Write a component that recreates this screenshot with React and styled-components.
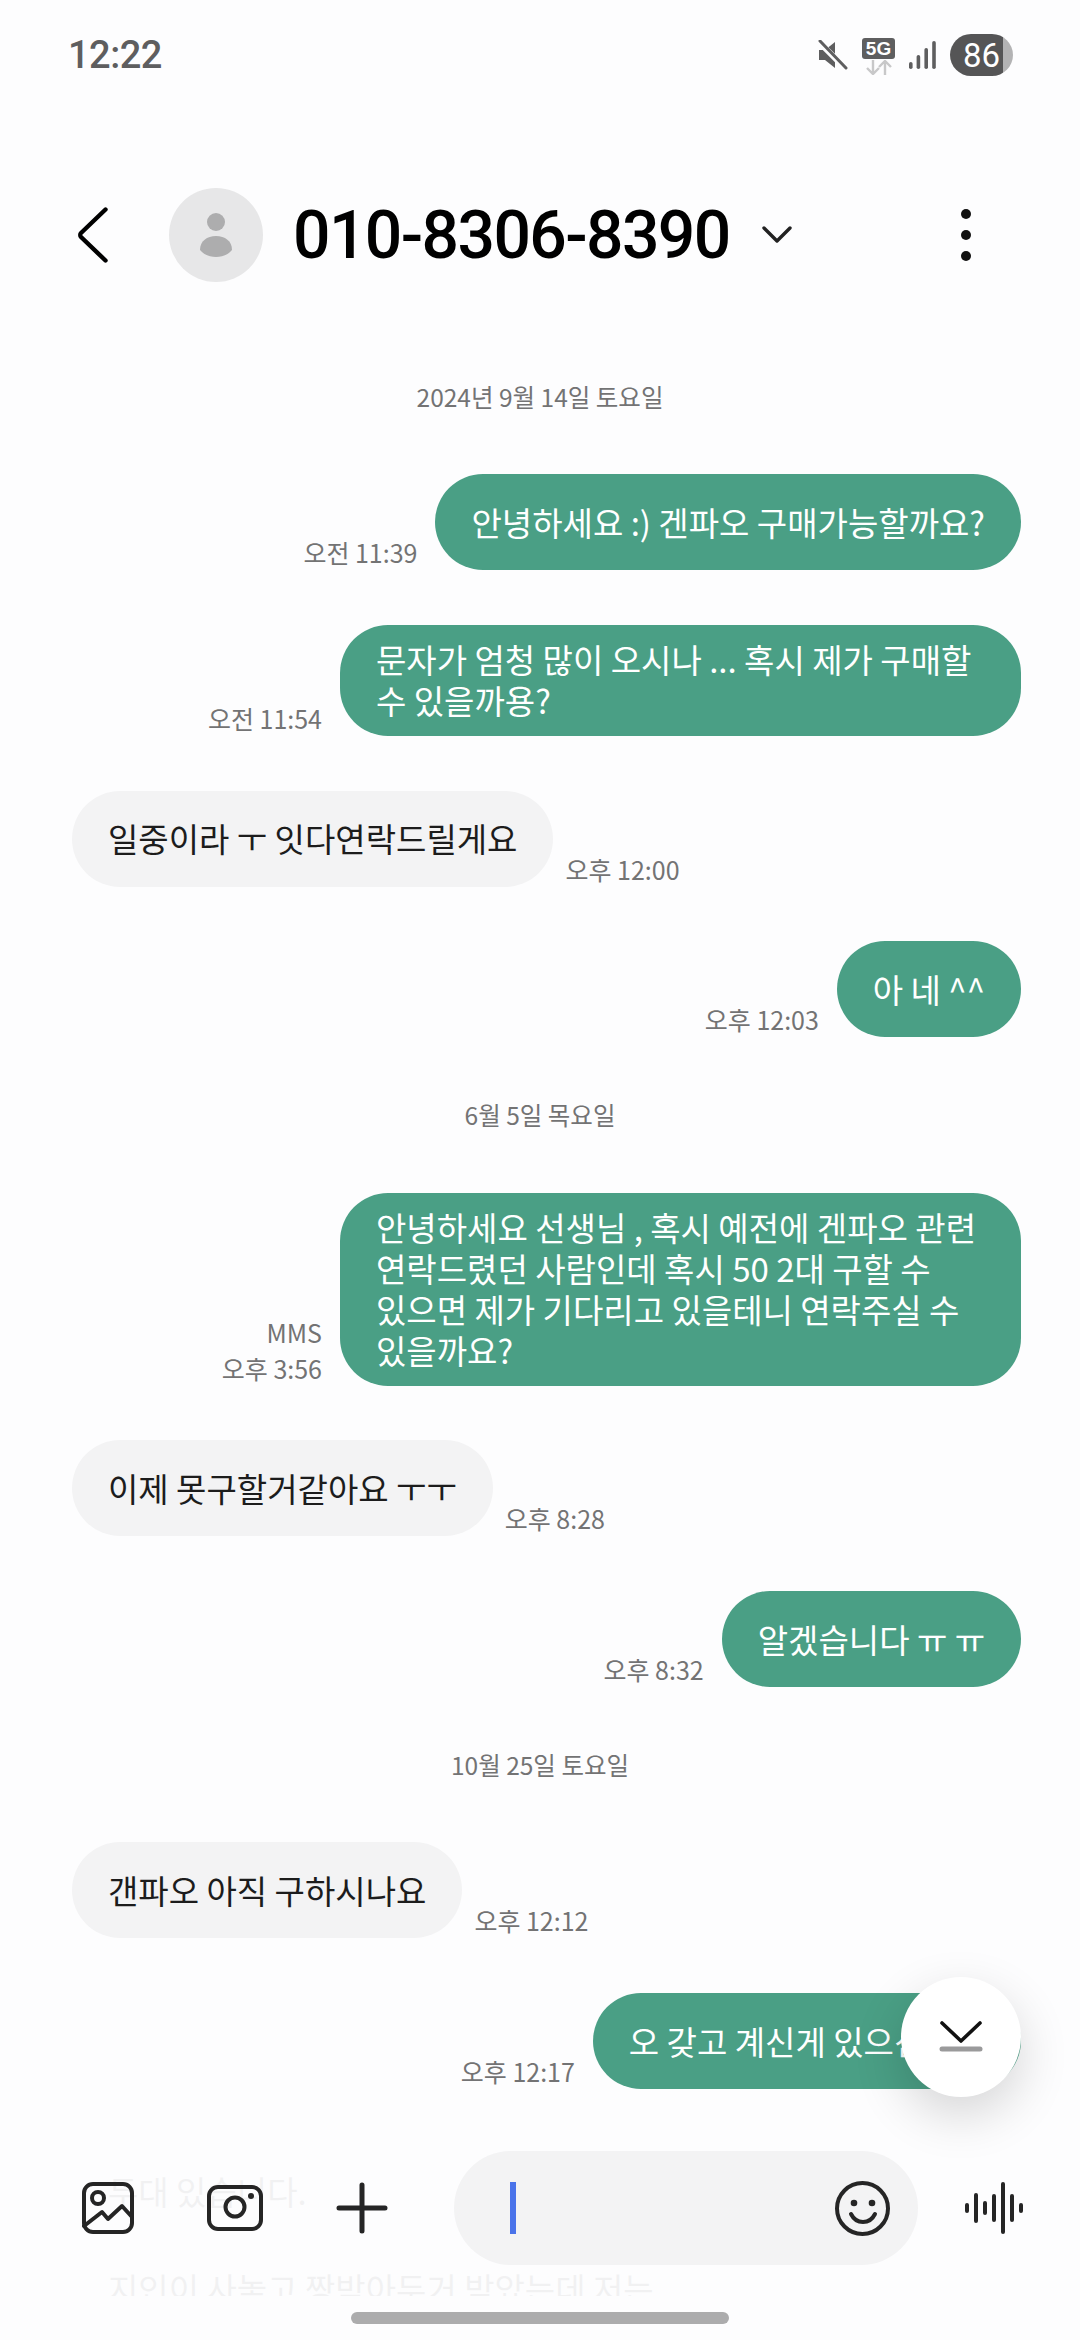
import React from "react";
import styled, { createGlobalStyle } from "styled-components";

const FONT = `"Noto Sans CJK KR", "Noto Sans", sans-serif`;

const GlobalStyle = createGlobalStyle`
  html, body {
    margin: 0;
    padding: 0;
    background: #fdfdfe;
    font-family: ${FONT};
  }
`;

const messages = [
  { date: "2024년 9월 14일 토요일" },
  { mine: true, time: "오전 11:39", text: "안녕하세요 :) 겐파오 구매가능할까요?" },
  { mine: true, time: "오전 11:54", text: "문자가 엄청 많이 오시나 ... 혹시 제가 구매할 수 있을까용?" },
  { time: "오후 12:00", text: "일중이라 ㅜ 잇다연락드릴게요" },
  { mine: true, time: "오후 12:03", text: "아 네 ^^" },
  { date: "6월 5일 목요일" },
  {
    mine: true,
    tag: "MMS",
    time: "오후 3:56",
    text: "안녕하세요 선생님 , 혹시 예전에 겐파오 관련 연락드렸던 사람인데 혹시 50 2대 구할 수 있으면 제가 기다리고 있을테니 연락주실 수 있을까요?",
  },
  { time: "오후 8:28", text: "이제 못구할거같아요 ㅜㅜ" },
  { mine: true, time: "오후 8:32", text: "알겠습니다 ㅠ ㅠ" },
  { date: "10월 25일 토요일" },
  { time: "오후 12:12", text: "갠파오 아직 구하시나요" },
  { mine: true, time: "오후 12:17", text: "오 갖고 계신게 있으신가요" },
  { text: "두대 있습니다." },
  { tight: true, text: "지인이 사놓고 짱박아두거 받았는데 저는\n\u00a0" },
];

const App = () => (
  <Phone>
    <GlobalStyle />
    <StatusBar>
      <Clock>12:22</Clock>
      <StatusIcons>
        <svg width="30" height="30" viewBox="0 0 30 30">
          <path d="M1 10h6l10-8v26l-10-8H1z" fill="#5e5e5f" />
          <path d="M2 3l26 26" stroke="#fdfdfe" strokeWidth="6" />
          <path d="M2 1l26 27" stroke="#5e5e5f" strokeWidth="3" strokeLinecap="round" />
        </svg>
        <NetworkIcon>
          <FiveG>5G</FiveG>
          <svg width="32" height="15" viewBox="0 0 32 15" fill="none" stroke="#c8c8c9" strokeWidth="2.4">
            <path d="M10 0v14M4 8l6 6 6-6M22 15V1M16 7l6-6 6 6" />
          </svg>
        </NetworkIcon>
        <svg width="27" height="28" viewBox="0 0 27 28" fill="#5e5e5f">
          <rect x="0" y="21" width="3.6" height="7" rx="1.8" />
          <rect x="7.6" y="14" width="3.6" height="14" rx="1.8" />
          <rect x="15.4" y="7" width="3.6" height="21" rx="1.8" />
          <rect x="23.2" y="0" width="3.6" height="28" rx="1.8" />
        </svg>
        <Battery level={84}>
          <span>86</span>
        </Battery>
      </StatusIcons>
    </StatusBar>

    <Header>
      <BackButton>
        <svg width="30" height="56" viewBox="0 0 30 56" fill="none" stroke="#000" strokeWidth="4.4" strokeLinecap="round" strokeLinejoin="round">
          <path d="M27.5 2.5L3 26c-1 1-1 3 0 4l24.5 23.500" />
        </svg>
      </BackButton>
      <Avatar>
        <svg width="32" height="44" viewBox="0 0 32 44" fill="#adadae">
          <circle cx="16" cy="9" r="9" />
          <path d="M0 37C0 28 7 23 16 23s16 5 16 14c-4 5-10 7-16 7S4 42 0 37z" />
        </svg>
      </Avatar>
      <ContactName>010-8306-8390</ContactName>
      <Chevron>
        <svg width="30" height="18" viewBox="0 0 30 18" fill="none" stroke="#222" strokeWidth="3.4" strokeLinecap="round" strokeLinejoin="round">
          <path d="M2 2l13 13L28 2" />
        </svg>
      </Chevron>
      <MoreDots>
        <i />
        <i />
        <i />
      </MoreDots>
    </Header>

    <Thread>
      {messages.map((m, i) =>
        m.date ? (
          <DateLine key={i}>{m.date}</DateLine>
        ) : (
          <Row key={i} $mine={m.mine} $tight={m.tight}>
            {m.time && (
              <Meta>
                {m.tag && <div>{m.tag}</div>}
                <div>{m.time}</div>
              </Meta>
            )}
            <Bubble $mine={m.mine}>{m.text}</Bubble>
          </Row>
        )
      )}
    </Thread>

    <ScrollDown>
      <svg width="44" height="32" viewBox="0 0 44 32" fill="none">
        <path d="M3 2l19 18L41 2" stroke="#111" strokeWidth="3.6" strokeLinecap="round" strokeLinejoin="round" />
        <path d="M3 28h38" stroke="#9a9a9b" strokeWidth="5" strokeLinecap="round" />
      </svg>
    </ScrollDown>

    <Composer>
      <ToolIcons>
        <svg width="52" height="52" viewBox="0 0 52 52" fill="none" stroke="#252525" strokeWidth="4" strokeLinejoin="round" strokeLinecap="round">
          <rect x="2" y="2" width="48" height="48" rx="9" />
          <circle cx="16" cy="16" r="6" />
          <path d="M2 44L20 30l6 7 14-13 10 11" />
        </svg>
        <svg width="56" height="46" viewBox="0 0 56 46" fill="none" stroke="#252525" strokeWidth="4">
          <rect x="2" y="2" width="52" height="42" rx="9" />
          <circle cx="28" cy="22" r="9.500" />
          <circle cx="44" cy="11" r="3" fill="#252525" stroke="none" />
        </svg>
        <svg width="52" height="52" viewBox="0 0 52 52" fill="none" stroke="#252525" strokeWidth="5" strokeLinecap="round">
          <path d="M26 3v46M3 26h46" />
        </svg>
      </ToolIcons>
      <InputPill>
        <Caret />
        <svg width="55" height="55" viewBox="0 0 55 55" fill="none" stroke="#252525" strokeWidth="4" strokeLinecap="round">
          <circle cx="27.5" cy="27.5" r="25.5" />
          <path d="M16 33c3 6 7 8 12 8s9-2 12-8" />
          <circle cx="19" cy="22" r="3.300" fill="#252525" stroke="none" />
          <circle cx="37" cy="22" r="3.300" fill="#252525" stroke="none" />
        </svg>
      </InputPill>
      <svg width="59" height="52" viewBox="0 0 59 52" fill="none" stroke="#252525" strokeWidth="4" strokeLinecap="round">
        <path d="M3 23v6M12 13v26M21 21v10M30 14v24M39 2v48M48 14v24M57 23v6" />
      </svg>
    </Composer>
    <NavBar>
      <HomeHandle />
    </NavBar>
  </Phone>
);

const Phone = styled.div`
  position: relative;
  display: flex;
  flex-direction: column;
  width: 1080px;
  height: 2340px;
  overflow: hidden;
  background: #fdfdfe;
`;

const StatusBar = styled.div`
  display: flex;
  flex: none;
  align-items: center;
  justify-content: space-between;
  height: 110px;
  padding: 0 67px 0 68px;
  box-sizing: border-box;
`;

const Clock = styled.div`
  font-family: Roboto, sans-serif;
  font-size: 38px;
  font-weight: 500;
  letter-spacing: -0.5px;
  color: #5e5e5f;
`;

const StatusIcons = styled.div`
  display: flex;
  align-items: center;
  gap: 14px;
`;

const NetworkIcon = styled.div`
  display: flex;
  flex-direction: column;
  align-items: center;
  gap: 1px;
  margin-top: 2px;
`;

const FiveG = styled.div`
  width: 33px;
  height: 21px;
  border-radius: 3px;
  background: #5e5e5f;
  color: #fff;
  font-family: "Liberation Sans", sans-serif;
  font-size: 19px;
  font-weight: 700;
  line-height: 21px;
  text-align: center;
`;

const Battery = styled.div`
  display: flex;
  align-items: center;
  justify-content: center;
  width: 63px;
  height: 42px;
  border-radius: 21px;
  color: #fff;
  font-family: Roboto, sans-serif;
  font-size: 33px;
  background: linear-gradient(
    to right,
    #555556 ${(p) => p.level}%,
    #b3b3b4 ${(p) => p.level}%
  );
`;

const Header = styled.div`
  display: flex;
  flex: none;
  align-items: center;
  height: 94px;
  margin-top: 78px;
  padding-left: 78px;
`;

const BackButton = styled.div`
  display: flex;
  width: 91px;
`;

const Avatar = styled.div`
  display: flex;
  align-items: center;
  justify-content: center;
  flex: none;
  width: 94px;
  height: 94px;
  border-radius: 50%;
  background: #e7e7e8;
`;

const ContactName = styled.div`
  margin-left: 30px;
  font-family: Roboto, sans-serif;
  font-size: 66px;
  font-weight: 500;
  letter-spacing: -1.6px;
  color: #000;
  white-space: nowrap;
`;

const Chevron = styled.div`
  display: flex;
  margin-left: 32px;
`;

const MoreDots = styled.div`
  display: flex;
  flex-direction: column;
  gap: 11px;
  margin-left: auto;
  margin-right: 109px;

  & > i {
    display: block;
    width: 10px;
    height: 10px;
    border-radius: 50%;
    background: #111;
  }
`;

const Thread = styled.div`
  display: flex;
  flex: none;
  flex-direction: column;
  gap: 54.7px;
  padding: 0 59px 0 72px;
  margin-top: 91.5px;
`;

const DateLine = styled.div`
  height: 46px;
  margin-right: 13px;
  line-height: 46px;
  font-size: 24.5px;
  text-align: center;
  color: #737374;
`;

const Row = styled.div`
  display: flex;
  flex-direction: ${(p) => (p.$mine ? "row" : "row-reverse")};
  justify-content: flex-end;
  align-items: flex-end;
  gap: ${(p) => (p.$mine ? "18px" : "12px")};
  margin-top: ${(p) => (p.$tight ? "-41px" : "0")};
`;

const Meta = styled.div`
  flex: none;
  font-size: 25px;
  line-height: 36px;
  color: #737374;
  text-align: right;
`;

const Bubble = styled.div`
  display: flex;
  align-items: center;
  box-sizing: border-box;
  min-height: 96px;
  max-width: 681px;
  padding: 14.5px 36px;
  border-radius: 48px;
  font-size: 33px;
  line-height: 41px;
  white-space: pre-line;
  word-break: keep-all;
  background: ${(p) => (p.$mine ? "#4a9f85" : "#f3f3f4")};
  color: ${(p) => (p.$mine ? "#fff" : "#1c1c1c")};
`;

const ScrollDown = styled.div`
  position: absolute;
  left: 901px;
  top: 1977px;
  display: flex;
  align-items: center;
  justify-content: center;
  width: 120px;
  height: 120px;
  border-radius: 50%;
  background: #fff;
  box-shadow: 0 18px 50px rgba(0, 0, 0, 0.16);
  z-index: 2;
`;

const Composer = styled.div`
  position: absolute;
  left: 0;
  right: 0;
  top: 2130px;
  height: 166px;
  display: flex;
  align-items: flex-start;
  padding: 21px 57px 0 82px;
  box-sizing: border-box;
  background: rgba(253, 253, 254, 0.95);
  z-index: 1;

  & > svg {
    flex: none;
    margin-top: 31px;
  }
`;

const ToolIcons = styled.div`
  display: flex;
  align-items: center;
  gap: 73px;
  height: 114px;
`;

const InputPill = styled.div`
  display: flex;
  align-items: center;
  justify-content: space-between;
  width: 464px;
  height: 114px;
  margin: 0 46px 0 66px;
  padding: 0 28px 0 56px;
  box-sizing: border-box;
  border-radius: 57px;
  background: #f3f3f4;
`;

const Caret = styled.div`
  width: 6px;
  height: 52px;
  background: #4a73ea;
`;

const NavBar = styled.div`
  position: absolute;
  left: 0;
  right: 0;
  bottom: 0;
  height: 44px;
  display: flex;
  justify-content: center;
  padding-top: 16px;
  box-sizing: border-box;
  background: #fdfdfe;
  z-index: 1;
`;

const HomeHandle = styled.div`
  width: 378px;
  height: 12px;
  border-radius: 6px;
  background: #acacad;
`;

export default App;
